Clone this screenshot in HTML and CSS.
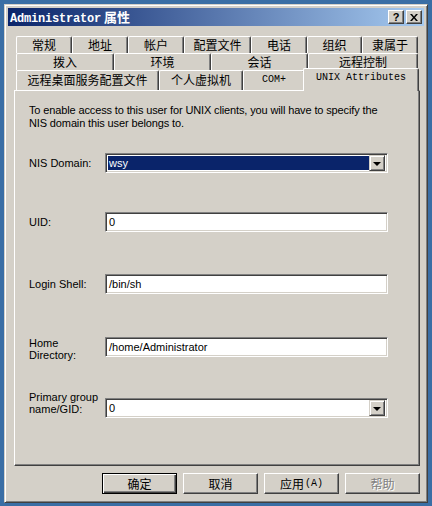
FILE: index.html
```html
<!DOCTYPE html>
<html lang="zh">
<head>
<meta charset="utf-8">
<title>Administrator 属性</title>
<link rel="stylesheet" href="styles.css">
</head>
<body>
<div class="window">
  <div class="titlebar">
    <span class="title"><span class="title-en">Administrator</span> <span class="title-zh">属性</span></span>
    <div class="tbtns">
      <span class="tbtn help">?</span>
      <span class="tbtn close"><svg width="8" height="7" viewBox="0 0 8 7"><path d="M0 0h2l2 2.5L6 0h2L5 3.5 8 7H6L4 4.5 2 7H0l3-3.5z" fill="#000"/></svg></span>
    </div>
  </div>
  <div class="body">
    <div class="tabs">
      <div class="row row1">
        <div class="tab">常规</div>
        <div class="tab">地址</div>
        <div class="tab">帐户</div>
        <div class="tab">配置文件</div>
        <div class="tab">电话</div>
        <div class="tab">组织</div>
        <div class="tab">隶属于</div>
      </div>
      <div class="row row2">
        <div class="tab">拨入</div>
        <div class="tab">环境</div>
        <div class="tab">会话</div>
        <div class="tab">远程控制</div>
      </div>
      <div class="row row3">
        <div class="tab">远程桌面服务配置文件</div>
        <div class="tab">个人虚拟机</div>
        <div class="tab mono">COM+</div>
        <div class="tab mono selected">UNIX Attributes</div>
      </div>
    </div>
    <div class="panel">
      <p class="intro">To enable access to this user for UNIX clients, you will have to specify the NIS domain this user belongs to.</p>
      <div class="form">
        <div class="field f-nis">
          <label class="lbl">NIS Domain:</label>
          <div class="combo focused"><span class="val">wsy</span><span class="dd"><i></i></span></div>
        </div>
        <div class="field f-uid">
          <label class="lbl">UID:</label>
          <div class="edit"><span class="val">0</span></div>
        </div>
        <div class="field f-shell">
          <label class="lbl">Login Shell:</label>
          <div class="edit"><span class="val">/bin/sh</span></div>
        </div>
        <div class="field f-home">
          <label class="lbl two">Home<br>Directory:</label>
          <div class="edit"><span class="val">/home/Administrator</span></div>
        </div>
        <div class="field f-gid">
          <label class="lbl two up">Primary group<br>name/GID:</label>
          <div class="combo"><span class="val">0</span><span class="dd"><i></i></span></div>
        </div>
      </div>
    </div>
    <div class="buttons">
      <div class="btn default">确定</div>
      <div class="btn">取消</div>
      <div class="btn">应用<span class="acc">(A)</span></div>
      <div class="btn disabled">帮助</div>
    </div>
  </div>
</div>
</body>
</html>
```
FILE: styles.css
```css
* { box-sizing: border-box; }
html, body { margin: 0; padding: 0; }
body {
  background: #3A6EA5;
  width: 432px;
  height: 506px;
  overflow: hidden;
  font-family: "Liberation Sans", Arial, sans-serif;
  font-size: 11px;
  color: #000;
}
.window {
  margin: 4px 0 0 4px;
  width: 424px;
  height: 499px;
  background: #D4D0C8;
  border: 1px solid;
  border-color: #D4D0C8 #404040 #404040 #D4D0C8;
  box-shadow: inset 1px 1px #fff, inset -1px -1px #808080;
  padding: 3px;
  display: flex;
  flex-direction: column;
}
.titlebar {
  height: 18px;
  flex: none;
  background: linear-gradient(to right, #0A246A, #A6CAF0);
  display: flex;
  align-items: center;
  justify-content: space-between;
  padding: 0 2px 0 2px;
  color: #fff;
}
.title { white-space: pre; line-height: 18px; }
.title-en { font: bold 12px "Liberation Mono", monospace; letter-spacing: -0.2px; }
.title-zh { font: bold 13px "Noto Sans CJK SC", sans-serif; }
.tbtns { display: flex; gap: 2px; }
.tbtn {
  width: 16px; height: 14px;
  background: #D4D0C8;
  border: 1px solid;
  border-color: #fff #404040 #404040 #fff;
  box-shadow: inset -1px -1px #808080;
  display: flex; align-items: center; justify-content: center;
  color: #000;
  font: bold 11px "Liberation Sans", Arial, sans-serif;
  line-height: 1;
}
.body {
  flex: 1;
  padding: 10px 4px 0 6px;
  display: flex;
  flex-direction: column;
}
.tabs {
  margin: 0 2px;
  font: 12px "Noto Sans CJK SC", sans-serif;
}
.row { display: grid; }
.row1 { height: 17px; grid-template-columns: 56px 56px 56px 67px 56px 55px 56px; }
.row2 { height: 17px; grid-template-columns: 98px 97px 97px 1fr; }
.row3 { height: 20px; grid-template-columns: 143px 84px 62px 1fr; }
.tab {
  border-top: 1px solid #fff;
  border-left: 1px solid #fff;
  border-right: 1px solid #404040;
  box-shadow: inset -1px 0 #808080;
  border-radius: 2px 2px 0 0;
  background: #D4D0C8;
  text-align: center;
  line-height: 15px;
  white-space: nowrap;
  overflow: hidden;
}
.row3 .tab { line-height: 18px; }
.row3 .tab.mono { font: 10px "Liberation Mono", monospace; line-height: 18px; }
.row3 .tab.selected {
  position: relative;
  z-index: 1;
  margin: -2px -1px -1px -2px;
  line-height: 17px;
}
.panel {
  height: 376px;
  flex: none;
  border: 1px solid;
  border-color: #fff #404040 #404040 #fff;
  box-shadow: inset -1px -1px #808080;
  padding: 13px 30px 0 14px;
}
.intro { margin: 0; line-height: 13px; letter-spacing: -0.13px; }
.form { display: flex; flex-direction: column; }
.field { display: flex; align-items: center; height: 20px; }
.f-nis { margin-top: 23px; }
.f-uid { margin-top: 39px; }
.f-shell { margin-top: 42px; }
.f-home { margin-top: 43px; }
.f-gid { margin-top: 41px; }
.lbl { width: 76px; flex: none; line-height: 12px; }
.lbl.two { padding-top: 4px; }
.lbl.up { padding-top: 0; margin-bottom: 11px; }
.edit, .combo {
  width: 283px;
  height: 20px;
  background: #fff;
  border: 1px solid;
  border-color: #808080 #fff #fff #808080;
  box-shadow: inset 1px 1px #404040, inset -1px -1px #D4D0C8;
  padding: 2px 2px 2px 2px;
  display: flex;
  align-items: center;
}
.val { padding-left: 1px; line-height: 14px; }
.combo { padding-right: 2px; }
.combo .val { flex: 1; height: 14px; }
.combo.focused .val { background: #0A246A; color: #fff; }
.dd {
  width: 16px;
  height: 16px;
  margin-left: 0;
  background: #D4D0C8;
  border: 1px solid;
  border-color: #D4D0C8 #404040 #404040 #D4D0C8;
  box-shadow: inset 1px 1px #fff, inset -1px -1px #808080;
  display: flex; align-items: center; justify-content: center;
  flex: none;
}
.dd i {
  width: 0; height: 0;
  border-left: 4px solid transparent;
  border-right: 4px solid transparent;
  border-top: 4px solid #000;
  margin-top: 1px;
}
.buttons {
  margin-top: 7px;
  display: flex;
  justify-content: flex-end;
  gap: 6px;
}
.btn {
  width: 75px;
  height: 21px;
  background: #D4D0C8;
  border: 1px solid;
  border-color: #fff #404040 #404040 #fff;
  box-shadow: inset -1px -1px #808080;
  font: 12px "Noto Sans CJK SC", sans-serif;
  display: flex; align-items: center; justify-content: center;
  line-height: 1;
}
.btn.default {
  border: 1px solid #000;
  box-shadow: inset 1px 1px #fff, inset -1px -1px #404040, inset -2px -2px #808080;
}
.acc { font: 10px "Liberation Mono", monospace; margin-left: 1px; }
.btn.disabled { color: #808080; text-shadow: 1px 1px #fff; }
```
